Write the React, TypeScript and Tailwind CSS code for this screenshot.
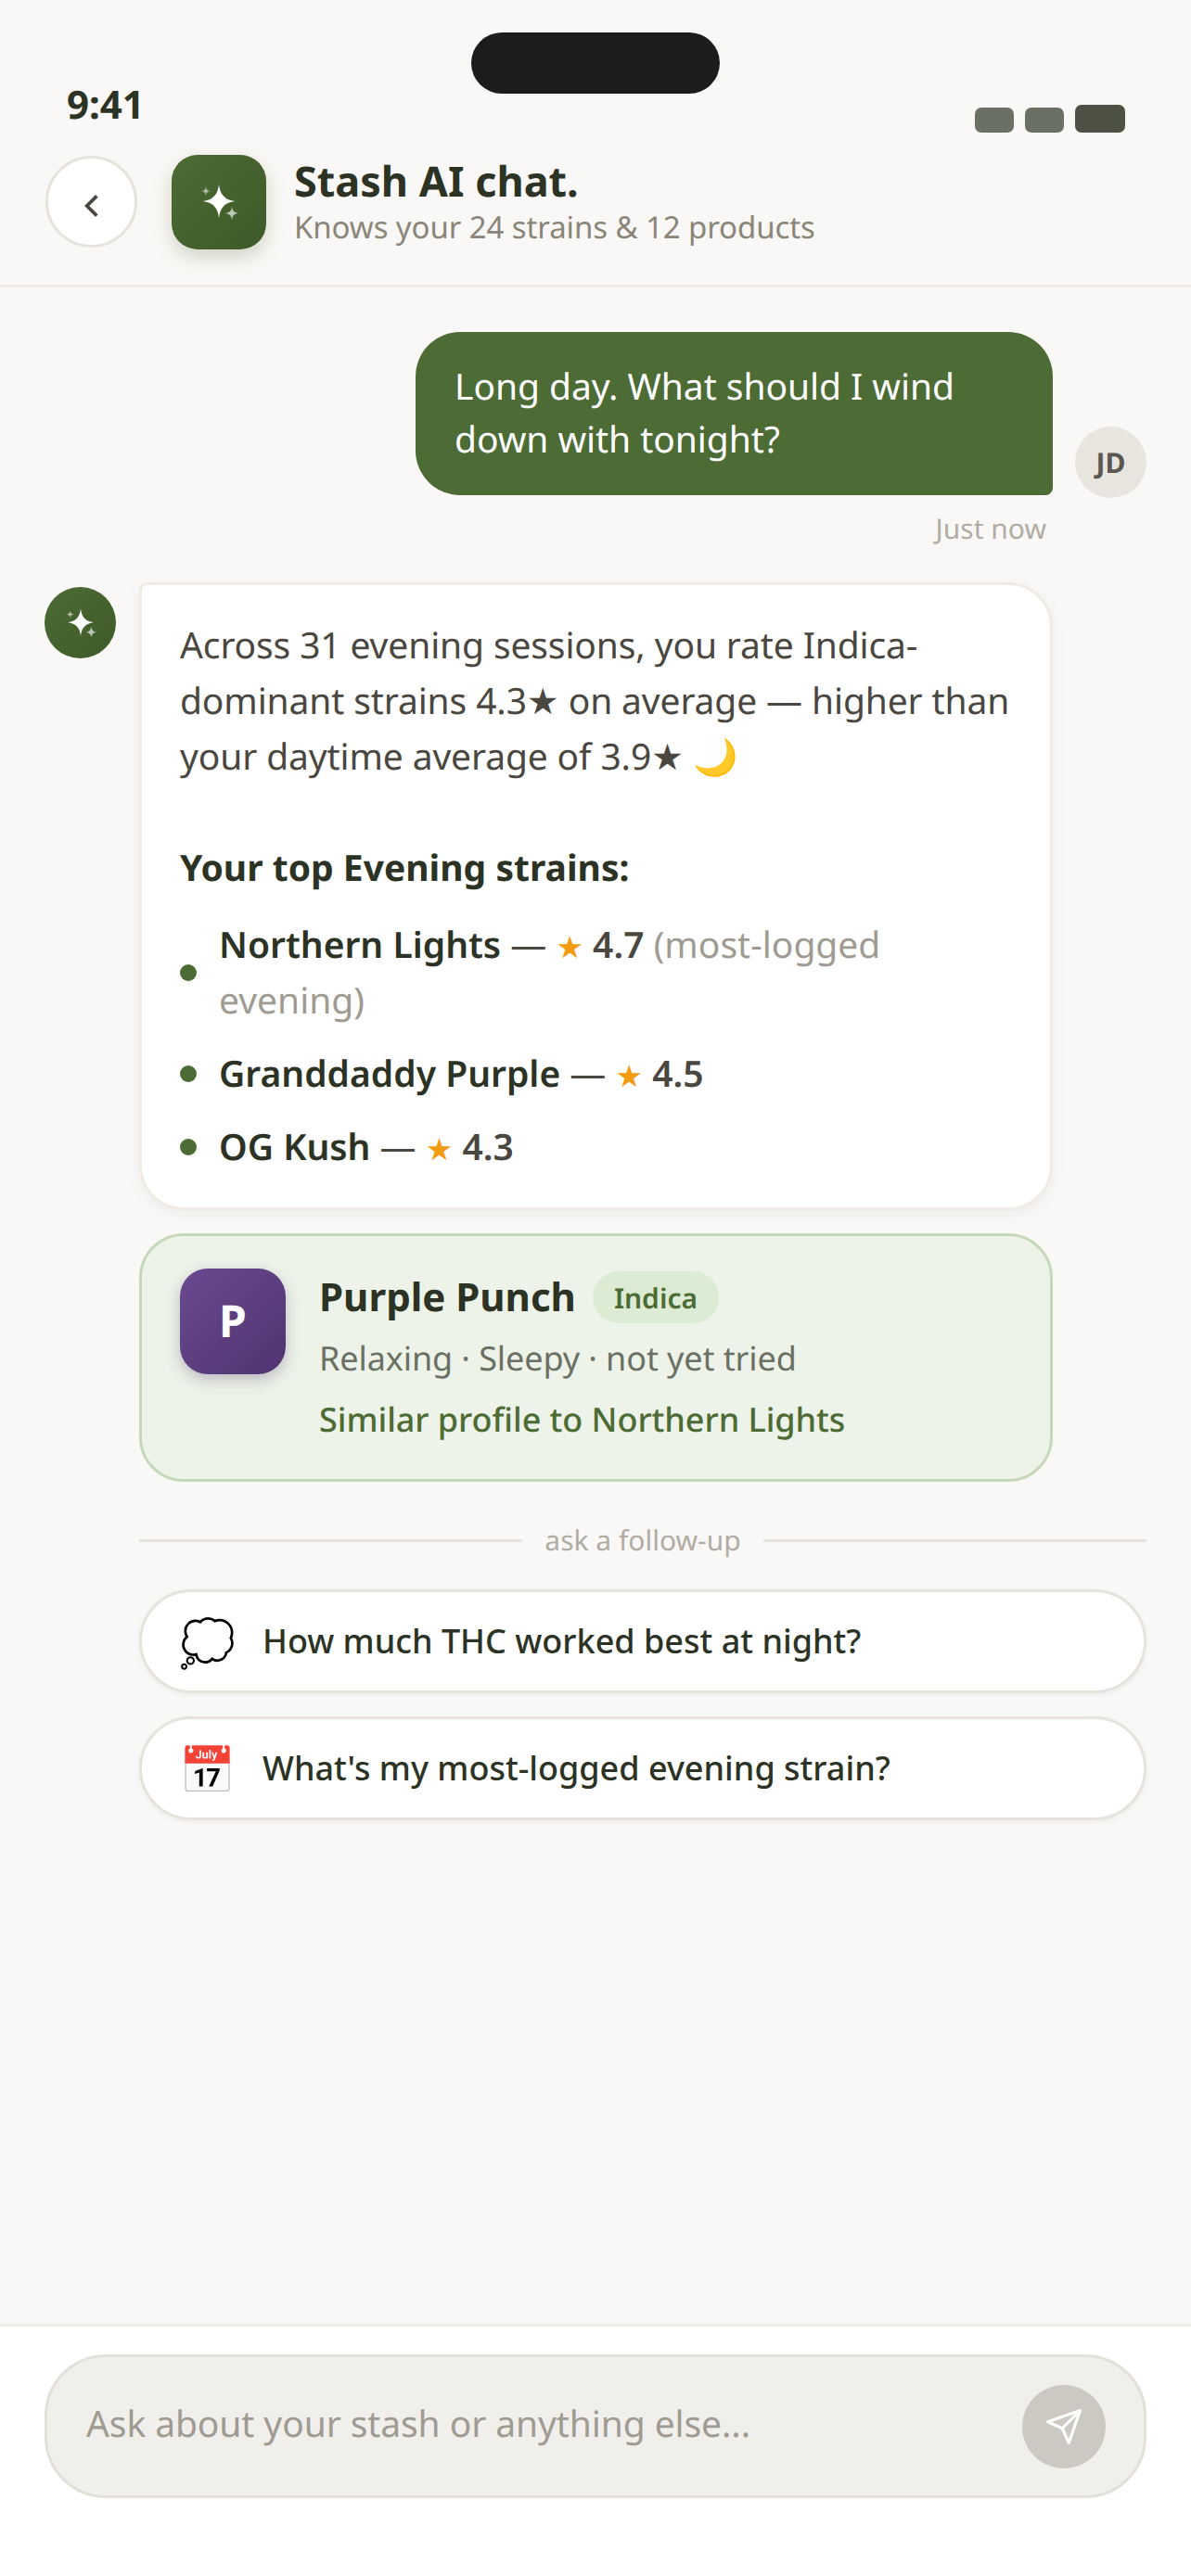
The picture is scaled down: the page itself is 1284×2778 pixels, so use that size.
const Sparkles = ({ className }: { className: string }) => (
  <svg viewBox="0 0 48 48" className={className}>
    <path d="M24 6Q25.200 21.500 40 23 25.200 24.500 24 40 22.800 24.500 8 23 22.800 21.500 24 6z" fill="#fff" />
    <path d="M11 8.500Q11.400 12.600 15.500 13 11.400 13.400 11 17.500 10.600 13.400 6.500 13 10.600 12.600 11 8.500z" fill="#fff" fillOpacity=".55" />
    <path d="M37 28.500Q37.600 34.400 43.500 35 37.600 35.600 37 41.500 36.400 35.600 30.500 35 36.400 34.400 37 28.500z" fill="#fff" fillOpacity=".65" />
  </svg>
);

const strains = [
  { name: "Northern Lights", score: "4.7", note: "(most-logged evening)" },
  { name: "Granddaddy Purple", score: "4.5", note: "" },
  { name: "OG Kush", score: "4.3", note: "" },
];

const StrainRow = ({ name, score, note }: { name: string; score: string; note: string }) => (
  <li className="flex items-center gap-[24px]">
    <span className="w-[18px] h-[18px] rounded-full bg-[#4d6b35] shrink-0" />
    <div className="text-[39px] leading-[60px] text-[#4a4640]">
      <span className="font-semibold text-[#2c3325]">{name}</span> — <span className="text-[#f39c12] text-[33px] leading-none">★</span>{" "}
      <span className="font-semibold">{score}</span>
      {note && <span className="text-[#a09b92]"> {note}</span>}
    </div>
  </li>
);

const Chip = ({ icon, label }: { icon: string; label: string }) => (
  <button className="h-[112px] rounded-full bg-white border-[3px] border-[#e6e3dd] shadow-[0_2px_6px_rgba(0,0,0,0.05)] flex items-center gap-[32px] px-[40px] text-[36px] text-[#2c3325] font-medium">
    <span className="w-[58px] text-[49px] leading-none">{icon}</span>
    {label}
  </button>
);

export default function App() {
  return (
    <div className="w-[1284px] h-[2778px] bg-[#faf8f6] flex flex-col font-['Noto_Sans',sans-serif] [text-rendering:geometricPrecision]">
      <div className="relative h-[167px] shrink-0 px-[72px] flex items-start justify-between">
        <div className="absolute left-[508px] top-[35px] w-[268px] h-[66px] rounded-[33px] bg-[#1c1c1e]" />
        <span className="mt-[85px] text-[42px] leading-[56px] font-bold text-[#2c3325]">9:41</span>
        <div className="mt-[113px] mr-[-1px] flex items-end gap-[12px]">
          <span className="w-[42px] h-[27px] rounded-[7px] bg-[#6b7064]" />
          <span className="w-[42px] h-[27px] rounded-[7px] bg-[#6b7064]" />
          <span className="w-[54px] h-[30px] rounded-[7px] bg-[#4d5245]" />
        </div>
      </div>

      <header className="h-[143px] shrink-0 border-b-[3px] border-[#eeebe6] pl-[49px] flex items-start">
        <button className="mt-px w-[99px] h-[99px] rounded-full bg-white border-[3px] border-[#e6e3dd] flex items-center justify-center text-[#4a4640]">
          <svg viewBox="0 0 24 24" className="w-[32px] h-[32px] mt-[9px]" fill="none" stroke="currentColor" strokeWidth="2.800">
            <path d="M16 4l-8 8 8 8" />
          </svg>
        </button>
        <div className="ml-[37px] w-[102px] h-[102px] rounded-[28px] bg-gradient-to-br from-[#4d6b35] to-[#3d5a28] shadow-[0_8px_20px_rgba(78,107,53,0.25)] flex items-center justify-center">
          <Sparkles className="w-[52px] h-[52px]" />
        </div>
        <div className="ml-[30px]">
          <h1 className="text-[45px] leading-[56px] font-bold text-[#2c3325] mt-[1px]">Stash AI chat.</h1>
          <p className="text-[33px] leading-[42px] tracking-[-0.1px] text-[#8a8578]">Knows your 24 strains &amp; 12 products</p>
        </div>
      </header>

      <main className="flex-1 px-[48px] pt-[48px]">
        <div className="flex items-end justify-end gap-[24px]">
          <div className="w-[687px] h-[176px] rounded-[48px] rounded-br-[8px] bg-[#4d6b35] px-[42px] py-[30px] text-[39px] leading-[57px] tracking-[-0.05px] text-white">
            Long day. What should I wind down with tonight?
          </div>
          <div className="w-[77px] h-[77px] rounded-full bg-[#e8e5df] flex items-center justify-center text-[30px] font-bold text-[#5a5650] mb-[-3px]">
            JD
          </div>
        </div>
        <p className="mt-[16px] mr-[108px] text-right text-[30px] leading-[40px] text-[#b0aca4]">Just now</p>

        <div className="mt-[38px] flex items-start gap-[25px]">
          <div className="mt-[5px] w-[77px] h-[77px] rounded-full bg-gradient-to-br from-[#4d6b35] to-[#3d5a28] flex items-center justify-center shrink-0">
            <Sparkles className="w-[42px] h-[42px]" />
          </div>
          <div className="w-[985px]">
            <div className="h-[677px] rounded-[48px] rounded-tl-[8px] bg-white border-[3px] border-[#f0ebe5] shadow-[0_4px_16px_rgba(0,0,0,0.05)] px-[41px] pt-[35px]">
              <p className="text-[39px] leading-[60px] tracking-[-0.13px] text-[#4a4640]">
                Across 31 evening sessions, you rate Indica-dominant strains 4.3★ on average — higher than your daytime average of 3.9★ 🌙
              </p>
              <p className="mt-[60px] text-[39px] leading-[60px] font-bold text-[#2c3325]">Your top Evening strains:</p>
              <ul className="mt-[23px] flex flex-col gap-[19px]">
                {strains.map((s) => (
                  <StrainRow key={s.name} name={s.name} score={s.score} note={s.note} />
                ))}
              </ul>
            </div>

            <div className="mt-[25px] h-[268px] rounded-[48px] bg-[#edf3e8] border-[3px] border-[#c5d8b9] px-[41px] pt-[35px] flex items-start gap-[36px]">
              <div className="w-[114px] h-[114px] rounded-[30px] bg-gradient-to-br from-[#6b4a8f] to-[#4f3470] shadow-[0_6px_16px_rgba(79,52,112,0.3)] flex items-center justify-center text-white text-[48px] font-bold shrink-0">
                P
              </div>
              <div className="pt-[3px]">
                <div className="flex items-center gap-[18px]">
                  <h2 className="text-[42px] leading-[56px] font-bold text-[#2c3325]">Purple Punch</h2>
                  <span className="h-[56px] px-[23px] rounded-full bg-[#dcebd3] flex items-center text-[30px] font-semibold text-[#4d6b35]">Indica</span>
                </div>
                <p className="mt-[10px] text-[36px] leading-[56px] tracking-[-0.1px] text-[#6b7064]">Relaxing · Sleepy · not yet tried</p>
                <p className="mt-[10px] text-[36px] leading-[56px] tracking-[-0.05px] font-medium text-[#4d6b35]">Similar profile to Northern Lights</p>
              </div>
            </div>
          </div>
        </div>

        <div className="ml-[102px] mt-[43px] flex flex-col gap-[25px]">
          <div className="mb-[8px] flex items-center gap-[24px] text-[30px] leading-[40px] text-[#b0aca4]">
            <span className="flex-1 h-[3px] bg-[#e6e3dd]" />
            ask a follow-up
            <span className="flex-1 h-[3px] bg-[#e6e3dd]" />
          </div>
          <Chip icon="💭" label="How much THC worked best at night?" />
          <Chip icon="📅" label="What's my most-logged evening strain?" />
        </div>
      </main>

      <footer className="h-[272px] shrink-0 bg-white border-t-[3px] border-[#eeebe6] px-[48px] pt-[30px]">
        <div className="h-[155px] rounded-[66px] bg-[#f1efeb] border-[3px] border-[#e3e0da] pl-[42px] pr-[41px] flex items-center justify-between">
          <span className="text-[39px] leading-[54px] mb-[5px] tracking-[-0.1px] text-[#a09b92]">Ask about your stash or anything else...</span>
          <button className="w-[90px] h-[90px] rounded-full bg-[#cbc9c2] flex items-center justify-center">
            <svg viewBox="0 0 24 24" className="w-[42px] h-[42px]" fill="none" stroke="#fff" strokeWidth="1.800" strokeLinejoin="round" strokeLinecap="round">
              <path d="M22 2L11 13M22 2l-7 20-4-9-9-4 20-7z" />
            </svg>
          </button>
        </div>
      </footer>
    </div>
  );
}
